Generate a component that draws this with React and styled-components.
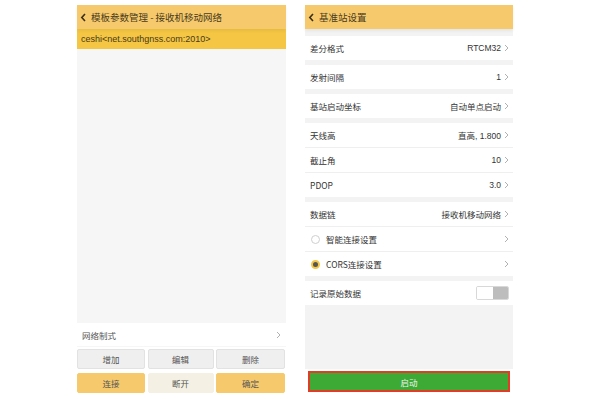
import { createGlobalStyle, styled } from 'styled-components';

const Global = createGlobalStyle`
    html, body {
        margin: 0;
        padding: 0;
        background: #ffffff;
    }
    body {
        font-family: "Noto Sans CJK SC", "Noto Sans", "Liberation Sans", sans-serif;
        color: #333;
    }
`;

const Page = styled.div`
    display: flex;
    gap: 19px;
    padding: 5px 0 0 77px;
    width: 600px;
    height: 399px;
    box-sizing: border-box;
`;

const Phone = styled.div`
    width: ${(p) => p.$w}px;
    height: 390px;
    display: flex;
    flex-direction: column;
    background: #f6f6f6;
`;

const Header = styled.div`
    height: 24px;
    flex: none;
    display: flex;
    align-items: center;
    gap: 4px;
    padding-left: 3px;
    background: #f6ca6c;
    color: #4a3a1c;
    font-size: 9.5px;
    box-shadow: 0 2px 3px rgba(0, 0, 0, 0.06);
    position: relative;
    z-index: 1;
`;

const ActiveItem = styled.div`
    height: 20px;
    flex: none;
    display: flex;
    align-items: center;
    padding-left: 4px;
    background: #f4c643;
    color: #4a3a1c;
    font-family: "Liberation Sans", "Noto Sans", sans-serif;
    font-size: 9px;
`;

const Filler = styled.div`
    flex: 1;
`;

const NetRow = styled.div`
    height: 23px;
    flex: none;
    display: flex;
    align-items: center;
    justify-content: space-between;
    margin-bottom: 1px;
    padding: 0 5px 0 5px;
    background: #fff;
    color: #555;
    font-size: 8.5px;
`;

const ButtonGrid = styled.div`
    display: grid;
    grid-template-columns: 68px 66px 69px;
    grid-auto-rows: 20px;
    column-gap: 2.5px;
    row-gap: 4px;
    padding: 2px 0 2px 0;
    background: #fff;
`;

const Btn = styled.div`
    display: flex;
    align-items: center;
    justify-content: center;
    border-radius: 2px;
    font-size: 8.5px;
    color: #555;
    box-sizing: border-box;
    background: ${(p) =>
        p.$kind === 'yellow' ? '#f6ca6c' : p.$kind === 'cream' ? '#f4f0e3' : '#efefef'};
    border: 1px solid
        ${(p) => (p.$kind === 'yellow' ? '#f6ca6c' : p.$kind === 'cream' ? '#f4f0e3' : '#e2e2e2')};
`;

const Body = styled.div`
    flex: 1;
    display: flex;
    flex-direction: column;
    gap: 5px;
    padding-top: 7px;
    background: #f3f3f3;
`;

const Card = styled.div`
    background: #fff;
    display: flex;
    flex-direction: column;
`;

const Row = styled.div`
    height: 24px;
    display: flex;
    align-items: center;
    justify-content: space-between;
    padding: 0 4px 0 5px;
    font-size: 8.5px;
    color: #333;
    & + & {
        border-top: 1px solid #efefef;
    }
`;

const Label = styled.div`
    display: flex;
    align-items: center;
    gap: 6px;
`;

const Value = styled.div`
    display: flex;
    align-items: center;
    gap: 3px;
    font-family: "Liberation Sans", "Noto Sans CJK SC", sans-serif;
`;

const Radio = styled.span`
    width: 9px;
    height: 9px;
    border-radius: 50%;
    box-sizing: border-box;
    border: ${(p) => (p.$on ? '2.5px solid #f4c643' : '1px solid #cfcfcf')};
    background: ${(p) => (p.$on ? '#555' : '#fff')};
    margin-left: 1px;
`;

const Toggle = styled.div`
    width: 33px;
    height: 14px;
    display: flex;
    border: 1px solid #d8d8d8;
    border-radius: 2px;
    box-sizing: border-box;
    overflow: hidden;
    &::before {
        content: '';
        flex: 1;
        background: #fff;
    }
    &::after {
        content: '';
        flex: 1;
        background: #bdbdbd;
    }
`;

const StartWrap = styled.div`
    padding: 2px 3px 3px 3px;
    background: #fff;
`;

const StartBtn = styled.div`
    height: 21px;
    box-sizing: border-box;
    background: #3caa34;
    border: 2px solid #e23b26;
    display: flex;
    align-items: center;
    justify-content: center;
    color: #f3f3f3;
    font-size: 8.5px;
`;

const Back = () => (
    <svg width="7" height="9" viewBox="0 0 7 9">
        <polyline points="5,1 1.8,4.5 5,8" fill="none" stroke="#3a2e14" strokeWidth="1.6" />
    </svg>
);

const Chevron = () => (
    <svg width="5" height="8" viewBox="0 0 5 8">
        <polyline points="1,1 4,4 1,7" fill="none" stroke="#a8a8a8" strokeWidth="0.9" />
    </svg>
);

export default function App() {
    return (
        <>
            <Global />
            <Page>
                <Phone $w={209}>
                    <Header>
                        <Back />
                        模板参数管理 - 接收机移动网络
                    </Header>
                    <ActiveItem>ceshi&lt;net.southgnss.com:2010&gt;</ActiveItem>
                    <Filler />
                    <NetRow>
                        网络制式
                        <Chevron />
                    </NetRow>
                    <ButtonGrid>
                        <Btn>增加</Btn>
                        <Btn>编辑</Btn>
                        <Btn>删除</Btn>
                        <Btn $kind="yellow">连接</Btn>
                        <Btn $kind="cream">断开</Btn>
                        <Btn $kind="yellow">确定</Btn>
                    </ButtonGrid>
                </Phone>
                <Phone $w={208}>
                    <Header>
                        <Back />
                        基准站设置
                    </Header>
                    <Body>
                        <Card>
                            <Row>
                                差分格式
                                <Value>
                                    RTCM32 <Chevron />
                                </Value>
                            </Row>
                        </Card>
                        <Card>
                            <Row>
                                发射间隔
                                <Value>
                                    1 <Chevron />
                                </Value>
                            </Row>
                        </Card>
                        <Card>
                            <Row>
                                基站启动坐标
                                <Value>
                                    自动单点启动 <Chevron />
                                </Value>
                            </Row>
                        </Card>
                        <Card>
                            <Row>
                                天线高
                                <Value>
                                    直高, 1.800 <Chevron />
                                </Value>
                            </Row>
                            <Row>
                                截止角
                                <Value>
                                    10 <Chevron />
                                </Value>
                            </Row>
                            <Row>
                                PDOP
                                <Value>
                                    3.0 <Chevron />
                                </Value>
                            </Row>
                        </Card>
                        <Card>
                            <Row>
                                数据链
                                <Value>
                                    接收机移动网络 <Chevron />
                                </Value>
                            </Row>
                            <Row>
                                <Label>
                                    <Radio />
                                    智能连接设置
                                </Label>
                                <Chevron />
                            </Row>
                            <Row>
                                <Label>
                                    <Radio $on />
                                    CORS连接设置
                                </Label>
                                <Chevron />
                            </Row>
                        </Card>
                        <Card>
                            <Row>
                                记录原始数据
                                <Toggle />
                            </Row>
                        </Card>
                        <Filler />
                    </Body>
                    <StartWrap>
                        <StartBtn>启动</StartBtn>
                    </StartWrap>
                </Phone>
            </Page>
        </>
    );
}
